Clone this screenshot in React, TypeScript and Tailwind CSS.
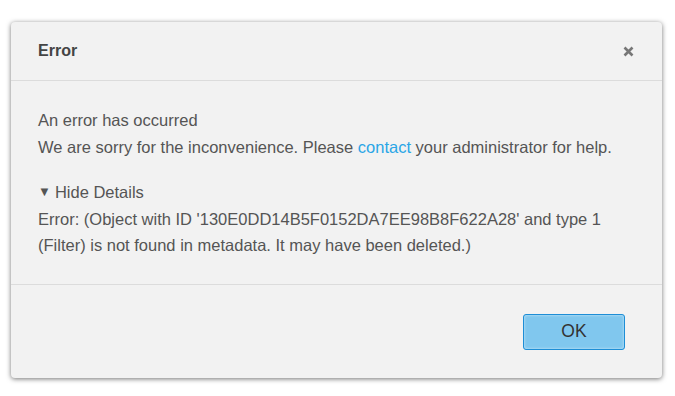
import React from 'react';

const App = () => {
  return (
    <div className="min-h-screen bg-white pt-[22px] pl-[11px]" style={{ fontFamily: '"Liberation Sans", Arial, sans-serif' }}>
      <div className="w-[651px] rounded-[4px] bg-[#f2f2f2] shadow-[0_1px_5px_rgba(0,0,0,0.55)]">
        {/* Header */}
        <div className="flex h-[59px] items-center justify-between border-b border-[#dcdcdc] pl-[27px] pr-[28px]">
          <h2 className="text-[16px] font-bold text-[#444]">Error</h2>
          <button type="button" className="flex h-[12px] w-[12px] items-center justify-center">
            <svg width="11" height="11" viewBox="0 0 11 11">
              <path d="M1.5 1.5 L9.5 9.5 M9.5 1.5 L1.5 9.5" stroke="#777" strokeWidth="2.6" strokeLinecap="butt" />
            </svg>
          </button>
        </div>

        {/* Body */}
        <div className="px-[27px] pt-[26px] pb-[25px] text-[16.5px] leading-[26.5px] text-[#555]">
          <p>An error has occurred</p>
          <p>
            We are sorry for the inconvenience. Please{' '}
            <a className="text-[#2ba6e6]">contact</a> your administrator for help.
          </p>
          <div className="mt-[19px]">
            <button type="button" className="flex items-center text-[#555]">
              <span className="mr-[4px] text-[13px]">▼</span>Hide Details
            </button>
            <p>
              Error: (Object with ID '130E0DD14B5F0152DA7EE98B8F622A28' and type 1
              <br />
              (Filter) is not found in metadata. It may have been deleted.)
            </p>
          </div>
        </div>

        {/* Footer */}
        <div className="flex h-[94px] items-start justify-end border-t border-[#dcdcdc] pt-[29px] pr-[37px]">
          <button
            type="button"
            className="h-[36px] w-[102px] rounded-[3px] border border-[#1e8ed6] bg-[#80c7ee] text-[17.5px] text-[#333] shadow-[inset_0_0_3px_rgba(255,255,255,0.6)]"
          >
            OK
          </button>
        </div>
      </div>
    </div>
  );
};

export default App;
